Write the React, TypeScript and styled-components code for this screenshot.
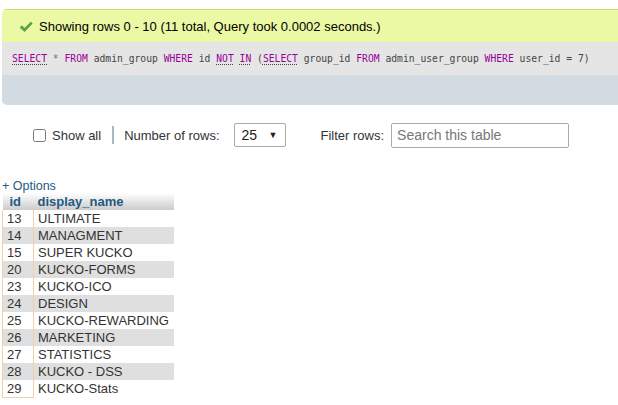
import styled, { createGlobalStyle } from "styled-components"

const GlobalStyle = createGlobalStyle`
    body {
        margin: 0;
        background: #ffffff;
        font-family: "Liberation Sans", Arial, sans-serif;
        color: #333;
    }
`

const rows: [number, string][] = [
    [13, "ULTIMATE"],
    [14, "MANAGMENT"],
    [15, "SUPER KUCKO"],
    [20, "KUCKO-FORMS"],
    [23, "KUCKO-ICO"],
    [24, "DESIGN"],
    [25, "KUCKO-REWARDING"],
    [26, "MARKETING"],
    [27, "STATISTICS"],
    [28, "KUCKO - DSS"],
    [29, "KUCKO-Stats"],
]

function CheckIcon() {
    return (
        <svg width="14" height="12" viewBox="0 0 14 12">
            <path d="M1 6.5 L3 4.8 L5.5 7.2 L12 1 L13.2 2.4 L5.6 10.6 Z" fill="#5aa84a" stroke="#3f8c35" strokeWidth="0.6" strokeLinejoin="round" />
        </svg>
    )
}

export default function App() {
    return (
        <Page>
            <GlobalStyle />
            <Result>
                <Success>
                    <CheckIcon />
                    <span>Showing rows 0 - 10 (11 total, Query took 0.0002 seconds.)</span>
                </Success>
                <Sql>
                    <Kw $link>SELECT</Kw>{" "}<Star>*</Star>{" "}<Kw>FROM</Kw>{" admin_group "}<Kw>WHERE</Kw>{" id "}<Kw $link>NOT</Kw>{" "}<Kw $link>IN</Kw>{" ("}<Kw $link>SELECT</Kw>{" group_id "}<Kw>FROM</Kw>{" admin_user_group "}<Kw>WHERE</Kw>{" user_id = 7)"}
                </Sql>
                <Tools />
            </Result>
            <Controls>
                <label>
                    <CheckBox type="checkbox" />
                    Show all
                </label>
                <Sep />
                <span>Number of rows:</span>
                <Select>
                    <span>25</span>
                    <Arrow>▼</Arrow>
                </Select>
                <FilterLabel>Filter rows:</FilterLabel>
                <Search placeholder="Search this table" />
            </Controls>
            <Options>+ Options</Options>
            <Table>
                <thead>
                    <tr>
                        <Th>id</Th>
                        <Th>display_name</Th>
                    </tr>
                </thead>
                <tbody>
                    {rows.map(([id, name], i) => (
                        <Row key={id} $even={i % 2 === 1}>
                            <IdCell $last={i === rows.length - 1}>{id}</IdCell>
                            <Td>{name}</Td>
                        </Row>
                    ))}
                </tbody>
            </Table>
        </Page>
    )
}

const Page = styled.div`
    padding: 9px 0 0 2px;
    width: 616px;
    overflow: hidden;
`

const Result = styled.div`
    border-radius: 5px 0 0 5px;
    overflow: hidden;
    width: 640px;
`

const Success = styled.div`
    display: flex;
    align-items: center;
    gap: 6px;
    height: 32px;
    padding-left: 17px;
    background: #ebf8a4;
    border-top: 1px solid #c8dd7a;
    font-size: 13px;
    color: #000;
    svg {
        margin-top: 2px;
    }
`

const Sql = styled.div`
    height: 33px;
    line-height: 33px;
    padding-left: 10px;
    background: #e5e5e5;
    font-family: "DejaVu Sans Mono", "Liberation Mono", monospace;
    font-size: 9.7px;
    color: #444;
    white-space: pre;
`

const Kw = styled.span<{ $link?: boolean }>`
    color: #990099;
    text-decoration: ${(p) => (p.$link ? "underline dotted #444" : "none")};
    text-underline-offset: 2px;
`

const Star = styled.span`
    color: #777;
`

const Tools = styled.div`
    height: 30px;
    background: #d3dce3;
`

const Controls = styled.div`
    display: flex;
    align-items: center;
    height: 26px;
    margin-top: 17px;
    padding-left: 31px;
    font-size: 13px;
    color: #333;
    label {
        display: flex;
        align-items: center;
    }
`

const CheckBox = styled.input`
    margin: 0 6px 0 0;
    width: 13px;
    height: 13px;
`

const Sep = styled.span`
    width: 2px;
    height: 18px;
    background: #aab8c6;
    margin: 0 10px 0 11px;
`

const Select = styled.div`
    display: flex;
    align-items: center;
    justify-content: space-between;
    box-sizing: border-box;
    width: 52px;
    height: 24px;
    margin-left: 14px;
    padding: 0 7px 0 7px;
    border: 1px solid #aaa;
    border-radius: 2px;
    font-size: 14px;
    color: #222;
`

const Arrow = styled.span`
    font-size: 9px;
`

const FilterLabel = styled.span`
    margin-left: 35px;
`

const Search = styled.input`
    box-sizing: border-box;
    width: 178px;
    height: 25px;
    margin-left: 7px;
    padding: 0 5px;
    border: 1px solid #aaa;
    border-radius: 2px;
    font-family: "Liberation Sans", Arial, sans-serif;
    font-size: 14px;
    &::placeholder {
        color: #777;
    }
`

const Options = styled.div`
    margin-top: 31px;
    font-size: 12.5px;
    color: #235a81;
    line-height: 14px;
`

const Table = styled.table`
    border-collapse: collapse;
    table-layout: fixed;
    width: 172px;
    font-size: 13px;
    white-space: nowrap;
`

const Th = styled.th`
    height: 17px;
    padding: 0 0 0 4px;
    text-align: left;
    font-weight: bold;
    color: #235a81;
    background: linear-gradient(#ffffff, #cccccc);
    &:first-child {
        width: 31px;
        box-sizing: border-box;
        padding-left: 7px;
    }
`

const Row = styled.tr<{ $even: boolean }>`
    background: ${(p) => (p.$even ? "#dfdfdf" : "#ffffff")};
`

const Td = styled.td`
    height: 17px;
    padding: 0 0 0 4px;
    line-height: 15px;
    color: #333;
`

const IdCell = styled(Td)<{ $last: boolean }>`
    padding-left: 4px;
    border-left: 1px solid #f3cfa7;
    border-right: 1px solid #f3cfa7;
    border-bottom: ${(p) => (p.$last ? "1px solid #f3cfa7" : "none")};
`
